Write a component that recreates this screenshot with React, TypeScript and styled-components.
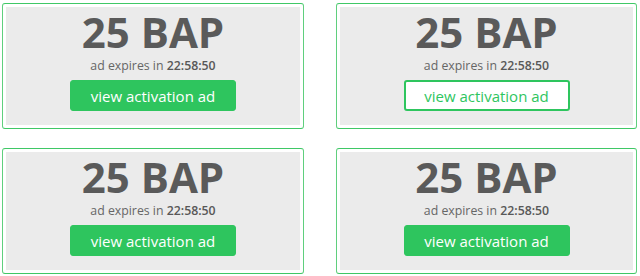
import React from "react";
import styled, { createGlobalStyle } from "styled-components";

const GlobalStyle = createGlobalStyle`
  body {
    margin: 0;
    background: #ffffff;
    font-family: "Open Sans", "Liberation Sans", sans-serif;
  }
`;

interface Ad {
  amount: string;
  expires: string;
  outline?: boolean;
}

const ads: Ad[] = [
  { amount: "25 BAP", expires: "22:58:50" },
  { amount: "25 BAP", expires: "22:58:50", outline: true },
  { amount: "25 BAP", expires: "22:58:50" },
  { amount: "25 BAP", expires: "22:58:50" },
];

const App = () => {
  return (
    <>
      <GlobalStyle />
      <Grid>
        {ads.map((ad, i) => (
          <Card key={i}>
            <Inner>
              <Amount>{ad.amount}</Amount>
              <Expires>
                ad expires in <strong>{ad.expires}</strong>
              </Expires>
              <AdButton $outline={ad.outline}>view activation ad</AdButton>
            </Inner>
          </Card>
        ))}
      </Grid>
    </>
  );
};

export default App;

const Grid = styled.div`
  display: grid;
  grid-template-columns: 302px 301px;
  column-gap: 32px;
  row-gap: 19px;
  padding: 3px 0 0 2px;
`;

const Card = styled.div`
  height: 126px;
  box-sizing: border-box;
  padding: 3px;
  border: 1px solid #5fcf7d;
  border-top-color: #3fc866;
  border-bottom-color: #3fc866;
  border-radius: 3px;
  background: #ffffff;
`;

const Inner = styled.div`
  height: 100%;
  background: #ebebeb;
  display: flex;
  flex-direction: column;
  align-items: center;
  padding-top: 3px;
  box-sizing: border-box;
`;

const Amount = styled.div`
  font-size: 42px;
  font-weight: 700;
  line-height: 44px;
  color: #5a5a5a;
`;

const Expires = styled.div`
  margin-top: 4px;
  font-size: 12.3px;
  line-height: 16px;
  color: #666666;

  strong {
    font-weight: 600;
    color: #585858;
  }
`;

const AdButton = styled.button<{ $outline?: boolean }>`
  margin-top: 6px;
  width: 166px;
  height: 31px;
  box-sizing: border-box;
  border-radius: 3px;
  font-family: "Open Sans", "Liberation Sans", sans-serif;
  font-size: 15px;
  padding: 0;
  cursor: pointer;
  border: ${(p) => (p.$outline ? "2px solid #2ec55e" : "1px solid #2ec55e")};
  background: ${(p) => (p.$outline ? "#ffffff" : "#2ec55e")};
  color: ${(p) => (p.$outline ? "#2ec55e" : "#ffffff")};
`;
